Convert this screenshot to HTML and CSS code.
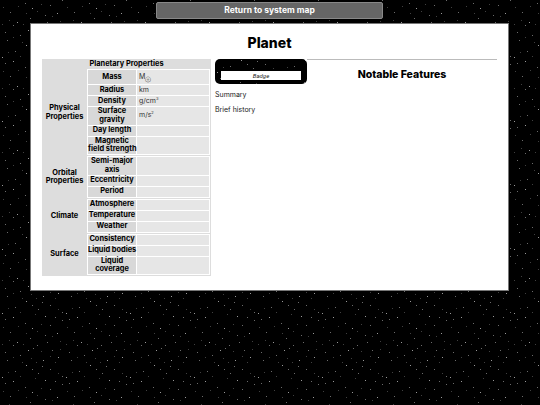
FILE: index.html
```html
<!DOCTYPE html>
<html lang="en">
<head>
    <meta charset="UTF-8">
    <title>Planet</title>
    <link rel="stylesheet" href="styles.css">
</head>
<body>
    <a class="return-button" href="#">Return to system map</a>
    <div id="page-panel">
        <h1>Planet</h1>
        <div class="columns">
            <table class="properties">
                <colgroup>
                    <col class="names-col">
                    <col>
                </colgroup>
                <tr>
                    <th class="section-title" colspan="2">Planetary Properties</th>
                </tr>
                <tr>
                    <th>Physical<br>Properties</th>
                    <td class="group-cell">
                        <table class="group">
                            <colgroup><col class="label-col"><col></colgroup>
                            <tr class="tall"><th>Mass</th><td>M<sub>⊕</sub></td></tr>
                            <tr><th>Radius</th><td>km</td></tr>
                            <tr><th>Density</th><td>g/cm<sup>3</sup></td></tr>
                            <tr><th>Surface<br>gravity</th><td>m/s<sup>2</sup></td></tr>
                            <tr><th>Day length</th><td></td></tr>
                            <tr><th>Magnetic<br>field strength</th><td></td></tr>
                        </table>
                    </td>
                </tr>
                <tr>
                    <th>Orbital<br>Properties</th>
                    <td class="group-cell">
                        <table class="group">
                            <colgroup><col class="label-col"><col></colgroup>
                            <tr><th>Semi-major<br>axis</th><td></td></tr>
                            <tr><th>Eccentricity</th><td></td></tr>
                            <tr><th>Period</th><td></td></tr>
                        </table>
                    </td>
                </tr>
                <tr>
                    <th>Climate</th>
                    <td class="group-cell">
                        <table class="group">
                            <colgroup><col class="label-col"><col></colgroup>
                            <tr><th>Atmosphere</th><td></td></tr>
                            <tr><th>Temperature</th><td></td></tr>
                            <tr><th>Weather</th><td></td></tr>
                        </table>
                    </td>
                </tr>
                <tr>
                    <th>Surface</th>
                    <td class="group-cell">
                        <table class="group">
                            <colgroup><col class="label-col"><col></colgroup>
                            <tr><th>Consistency</th><td></td></tr>
                            <tr><th>Liquid bodies</th><td></td></tr>
                            <tr><th>Liquid<br>coverage</th><td></td></tr>
                        </table>
                    </td>
                </tr>
            </table>
            <div class="summary-column">
                <div class="badge-box"><div class="badge">Badge</div></div>
                <p>Summary</p>
                <p>Brief history</p>
            </div>
            <div class="features-column">
                <h2>Notable Features</h2>
            </div>
        </div>
    </div>
</body>
</html>
```

FILE: styles.css
```css
html {
    /* 64px star tile, one pixel per star */
    --stars: url("data:image/svg+xml,<svg xmlns='http://www.w3.org/2000/svg' width='64' height='64' fill='white'><path opacity='.6' d='M26 1h1v1h-1zM13 17h1v1h-1zM45 16h1v1h-1zM32 28h1v1h-1zM57 33h1v1h-1zM17 42h1v1h-1zM28 50h1v1h-1zM43 60h1v1h-1zM58 57h1v1h-1zM2 13h1v1h-1z'/><path opacity='.42' d='M32 5h1v1h-1zM5 19h1v1h-1zM25 23h1v1h-1zM38 9h1v1h-1zM55 17h1v1h-1zM62 20h1v1h-1zM10 32h1v1h-1zM50 25h1v1h-1zM45 35h1v1h-1zM30 38h1v1h-1zM5 52h1v1h-1zM33 48h1v1h-1zM52 50h1v1h-1zM20 55h1v1h-1zM13 45h1v1h-1zM37 45h1v1h-1zM47 42h1v1h-1zM62 12h1v1h-1zM7 60h1v1h-1zM15 7h1v1h-1zM50 5h1v1h-1zM42 2h1v1h-1z'/><path opacity='.25' d='M8 8h1v1h-1zM20 12h1v1h-1zM35 14h1v1h-1zM58 9h1v1h-1zM3 27h1v1h-1zM18 26h1v1h-1zM41 24h1v1h-1zM26 33h1v1h-1zM37 31h1v1h-1zM60 41h1v1h-1zM52 36h1v1h-1zM9 40h1v1h-1zM23 44h1v1h-1zM41 51h1v1h-1zM13 57h1v1h-1zM31 58h1v1h-1zM50 56h1v1h-1zM60 49h1v1h-1zM2 44h1v1h-1zM22 62h1v1h-1zM36 62h1v1h-1zM55 62h1v1h-1z'/></svg>");
}
body {
    margin: 0;
    height: 405px;
    overflow: hidden;
    box-sizing: border-box;
    padding-top: 2px;
    font-family: Inter, "Noto Sans", sans-serif;
    color: #000;
    background-color: #000;
    background-image: var(--stars);
    background-position: 0 44px;
}
.return-button {
    display: block;
    box-sizing: border-box;
    width: 227px;
    height: 17px;
    margin: 0 0 4px 156px;
    background-color: #666;
    border: 1px solid #888;
    border-radius: 2px;
    color: #fff;
    font-size: 8.5px;
    font-weight: 700;
    line-height: 15px;
    text-align: center;
    text-decoration: none;
}
#page-panel {
    box-sizing: border-box;
    width: 479px;
    height: 268px;
    margin-left: 30px;
    padding: 0 11px;
    background-color: #fff;
    border: 1px solid #777;
}
h1 {
    margin: 0;
    height: 35px;
    font-size: 14px;
    font-weight: 800;
    line-height: 37px;
    text-align: center;
}
.columns {
    display: flex;
    align-items: flex-start;
}
.properties {
    width: 169px;
    flex: none;
    table-layout: fixed;
    border-collapse: collapse;
    background-color: #ddd;
    font-size: 7.4px;
    line-height: 8.75px;
}
.names-col {
    width: 45px;
}
.properties th {
    padding: 0;
    font-weight: 700;
    white-space: nowrap;
}
.section-title {
    height: 10px;
    text-align: center;
}
.group-cell {
    padding: 0 1px 1px 0;
}
.group {
    width: 100%;
    table-layout: fixed;
    border-collapse: separate;
    border-spacing: 1px;
    background-color: #fff;
}
.label-col {
    width: 48px;
}
.group th {
    height: 10px;
    background-color: #d8d8d8;
    text-align: center;
}
.group .tall th {
    height: 14px;
}
.group td {
    padding: 0 0 0 2px;
    background-color: #e6e6e6;
    color: #333;
    font-size: 7px;
}
sub, sup {
    font-size: 4px;
    line-height: 0;
}
.summary-column {
    width: 92px;
    flex: none;
    margin-left: 4px;
    font-size: 7px;
    color: #222;
}
.badge-box {
    box-sizing: border-box;
    height: 25px;
    padding: 12px 6px 4px;
    border-radius: 5px;
    background-color: #000;
    background-image: var(--stars);
}
.badge {
    height: 9px;
    background-color: #fff;
    font-family: Roboto, sans-serif;
    font-size: 6px;
    font-style: italic;
    line-height: 9px;
    text-align: center;
}
.summary-column p {
    margin: 7px 0 0;
    height: 8px;
    line-height: 8px;
}
.summary-column p + p {
    margin-top: 7px;
}
.features-column {
    flex: none;
    width: 190px;
    border-top: 1px solid #bbb;
}
h2 {
    margin: 8px 0 0;
    font-size: 10.5px;
    font-weight: 800;
    text-align: center;
}
```
